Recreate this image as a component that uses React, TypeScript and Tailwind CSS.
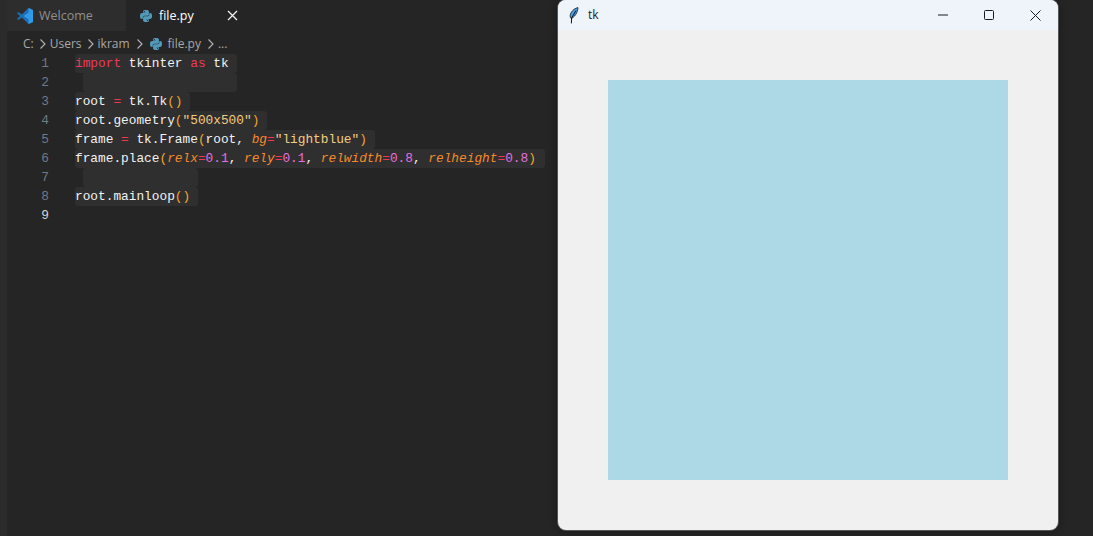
import type { ReactNode } from "react";
import { SiPython } from "react-icons/si";

function VsCodeIcon() {
  return (
    <svg width="18" height="18" viewBox="0 0 18 18" className="shrink-0">
      <path d="M1 6.2 2.4 5l3.4 2.6L12.6 1 17 3v12l-4.400 2-6.800-6.600L2.400 13 1 11.800 4.200 9z" fill="#1f6fb5" />
      <path d="M12.600 1 17 3v12l-4.400 2zM12.600 5.600 7.600 9l5 3.400z" fill="#2f9be6" fillRule="evenodd" />
    </svg>
  );
}

function Feather() {
  return (
    <svg width="10" height="17" viewBox="0 0 10 17" className="shrink-0">
      <path d="M9 .6C5 1.600 1.600 4.600 1.200 8.600c-.1 1.300.2 2.300.9 2.900C5.400 10.400 8.600 6 9 .6z" fill="#4a9fe4" stroke="#1b2a36" strokeWidth=".9" />
      <path d="M7 3.500 2.600 11 2.400 16.400" fill="none" stroke="#10151a" strokeWidth="1" />
    </svg>
  );
}

function Chevron() {
  return (
    <svg width="8" height="12" viewBox="0 0 8 12" className="shrink-0">
      <path d="M1.500 1.500 6 6l-4.500 4.500" fill="none" stroke="#b4b4b4" strokeWidth="1.100" />
    </svg>
  );
}

const Kw = ({ children }: { children: ReactNode }) => <span className="text-[#ee3a56]">{children}</span>;
const Op = () => <span className="text-[#f0384f]">=</span>;
const Br = ({ children }: { children: ReactNode }) => <span className="text-[#f2a52f]">{children}</span>;
const Str = ({ children }: { children: ReactNode }) => <span className="text-[#f3cd84]">{children}</span>;
const Arg = ({ children }: { children: ReactNode }) => <span className="italic text-[#f58a2c]">{children}</span>;
const Num = ({ children }: { children: ReactNode }) => <span className="text-[#e56fe0]">{children}</span>;

// highlight starts at the text unless the line is empty (those sit one indent in)
const lines: { w: number; indent?: boolean; code?: ReactNode }[] = [
  { w: 162, code: <><Kw>import</Kw> tkinter <Kw>as</Kw> tk</> },
  { w: 154, indent: true },
  { w: 115, code: <>root <Op /> tk.Tk<Br>()</Br></> },
  { w: 192, code: <>root.geometry<Br>(</Br><Str>"500x500"</Str><Br>)</Br></> },
  { w: 300, code: <>frame <Op /> tk.Frame<Br>(</Br>root, <Arg>bg</Arg><Op /><Str>"lightblue"</Str><Br>)</Br></> },
  {
    w: 470,
    code: (
      <>
        frame.place<Br>(</Br><Arg>relx</Arg><Op /><Num>0.1</Num>, <Arg>rely</Arg><Op /><Num>0.1</Num>, <Arg>relwidth</Arg><Op /><Num>0.8</Num>, <Arg>relheight</Arg><Op /><Num>0.8</Num><Br>)</Br>
      </>
    ),
  },
  { w: 115, indent: true },
  { w: 123, code: <>root.mainloop<Br>()</Br></> },
  { w: 0 },
];

export default function App() {
  return (
    <div className="relative flex h-screen w-full overflow-hidden bg-[#252525] font-['Open_Sans','Noto_Sans',sans-serif]">
      <div className="w-[7px] shrink-0 bg-[#2b2b2b]" />
      <div className="flex min-w-0 flex-1 flex-col">
        {/* Tabs */}
        <div className="flex h-[31px] shrink-0 items-stretch text-[12.500px]">
          <div className="flex w-[119px] items-center gap-[5px] bg-[#2d2d2d] pl-[9px] text-[#8f8f8f]">
            <VsCodeIcon />
            <span className="pt-[1px]">Welcome</span>
          </div>
          <div className="flex w-[119px] items-center pl-[8px] pr-[7px] text-white">
            <SiPython className="ml-[6px] shrink-0 text-[12px] text-[#519aba]" />
            <span className="ml-[7px] flex-1 pt-[1px]">file.py</span>
            <svg width="11" height="11" viewBox="0 0 11 11">
              <path d="M1 1l9 9M10 1l-9 9" stroke="#f0f0f0" strokeWidth="1.300" />
            </svg>
          </div>
        </div>

        {/* Breadcrumb */}
        <div className="flex h-[23px] shrink-0 items-center pl-[16px] pt-[2px] text-[12px] text-[#a8a8a8]">
          <span>C:</span>
          <span className="ml-[5px]"><Chevron /></span>
          <span className="ml-[3px]">Users</span>
          <span className="ml-[5px]"><Chevron /></span>
          <span className="ml-[3px]">ikram</span>
          <span className="ml-[6px]"><Chevron /></span>
          <span className="ml-[6px]"><SiPython className="text-[12px] text-[#519aba]" /></span>
          <span className="ml-[6px]">file.py</span>
          <span className="ml-[6px]"><Chevron /></span>
          <span className="ml-[3px]">...</span>
        </div>

        {/* Editor */}
        <div className="font-['Liberation_Mono',monospace] text-[12.800px] leading-[19px] text-[#f2f2f2]">
          {lines.map((line, i) => (
            <div key={i} className="flex h-[19px]">
              <div className={`w-[42px] shrink-0 text-right ${i === 8 ? "text-[#d4d4d4]" : "text-[#6f7a88]"}`}>{i + 1}</div>
              <div className="ml-[26px]">
                {line.w > 0 && (
                  <div
                    className={`h-[19px] whitespace-pre rounded-[3px] bg-[#2f2f2f] ${line.indent ? "ml-[8px]" : ""}`}
                    style={{ width: line.w }}
                  >
                    {line.code}
                  </div>
                )}
              </div>
            </div>
          ))}
        </div>
      </div>

      {/* tk window */}
      <div className="absolute left-[558px] top-0 flex h-[530px] w-[500px] flex-col overflow-hidden rounded-[8px] bg-[#f0f0f0] shadow-[0_0_0_1px_#555,0_0_10px_rgba(0,0,0,0.4)]">
        <div className="flex h-[30px] shrink-0 items-center bg-[#eef4f9] pl-[11px] text-[#1a1a1a]">
          <Feather />
          <span className="ml-[9px] flex-1 text-[12px]">tk</span>
          <div className="flex h-full w-[46px] items-center justify-center">
            <svg width="10" height="2" viewBox="0 0 10 2"><path d="M0 1h10" stroke="#1a1a1a" /></svg>
          </div>
          <div className="flex h-full w-[46px] items-center justify-center">
            <svg width="10" height="10" viewBox="0 0 10 10"><rect x=".5" y=".5" width="9" height="9" rx="1" fill="none" stroke="#1a1a1a" /></svg>
          </div>
          <div className="flex h-full w-[46px] items-center justify-center">
            <svg width="11" height="11" viewBox="0 0 11 11"><path d="M.5.5l10 10M10.500.5l-10 10" stroke="#1a1a1a" /></svg>
          </div>
        </div>
        <div className="flex-1 p-[50px]">
          <div className="h-[400px] w-[400px] bg-[#add8e6]" />
        </div>
      </div>
    </div>
  );
}
